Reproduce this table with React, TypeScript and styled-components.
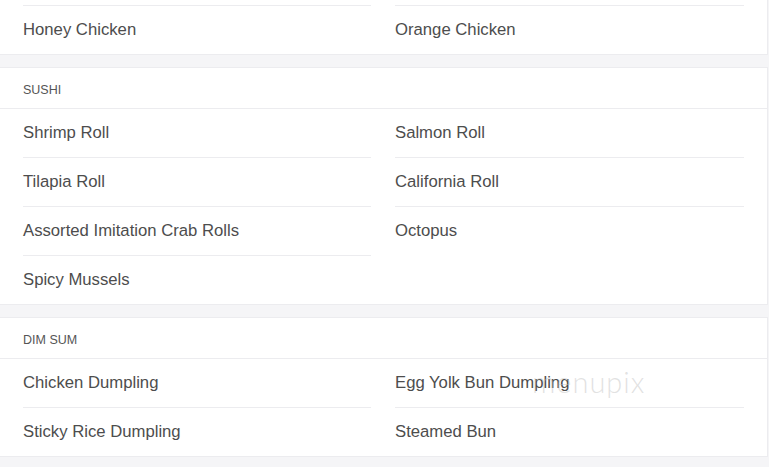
import React, { FC } from 'react';
import styled, { createGlobalStyle } from 'styled-components';

const GlobalStyle = createGlobalStyle`
  html, body {
    margin: 0;
    padding: 0;
    background: #f5f5f7;
    font-family: "Liberation Sans", Arial, sans-serif;
    overflow: hidden;
  }
`;

const Page = styled.div`
  position: relative;
  width: 768px;
  margin-top: -44px;
  display: flex;
  flex-flow: nowrap column;
  gap: 12px;
`;

const Card = styled.section`
  background: #fff;
  border-top: 1px solid #ececef;
  border-bottom: 1px solid #ececef;
  border-right: 1px solid #ececef;
  box-sizing: border-box;
`;

const Header = styled.h3`
  margin: 0;
  height: 41px;
  box-sizing: border-box;
  padding: 3px 23px 0;
  display: flex;
  align-items: center;
  border-bottom: 1px solid #ececef;
  font-size: 12.5px;
  font-weight: 400;
  color: #555;
  text-transform: uppercase;
`;

const Items = styled.ul`
  list-style: none;
  margin: 0;
  padding: 0 23px;
  display: grid;
  grid-template-columns: 348px 349px;
  column-gap: 24px;
`;

const Item = styled.li<{ $first: boolean }>`
  height: 48px;
  display: flex;
  align-items: center;
  border-top: ${({ $first }) => ($first ? 'none' : '1px solid #ececef')};
  font-size: 16.7px;
  color: #4d4d4d;
  white-space: nowrap;
`;

const Watermark = styled.div`
  position: absolute;
  left: 532px;
  top: 408px;
  font-family: Lato, "Open Sans", sans-serif;
  font-weight: 300;
  font-size: 29px;
  letter-spacing: 1px;
  color: rgba(190, 190, 190, 0.45);
  pointer-events: none;
`;

type Section = { title?: string; items: string[] };

const sections: Section[] = [
  { items: ['Sesame Chicken', 'General Tso\u2019s Chicken', 'Honey Chicken', 'Orange Chicken'] },
  {
    title: 'Sushi',
    items: ['Shrimp Roll', 'Salmon Roll', 'Tilapia Roll', 'California Roll', 'Assorted Imitation Crab Rolls', 'Octopus', 'Spicy Mussels'],
  },
  {
    title: 'Dim Sum',
    items: ['Chicken Dumpling', 'Egg Yolk Bun Dumpling', 'Sticky Rice Dumpling', 'Steamed Bun'],
  },
];

const MenuSection: FC<{ section: Section }> = ({ section }) => (
  <Card>
    {section.title && <Header>{section.title}</Header>}
    <Items>
      {section.items.map((name, i) => (
        <Item key={name} $first={i < 2}>{name}</Item>
      ))}
    </Items>
  </Card>
);

const App: FC = () => (
  <>
    <GlobalStyle />
    <Page>
      {sections.map((s) => (
        <MenuSection key={s.items[0]} section={s} />
      ))}
      <Watermark>menupix</Watermark>
    </Page>
  </>
);

export default App;
